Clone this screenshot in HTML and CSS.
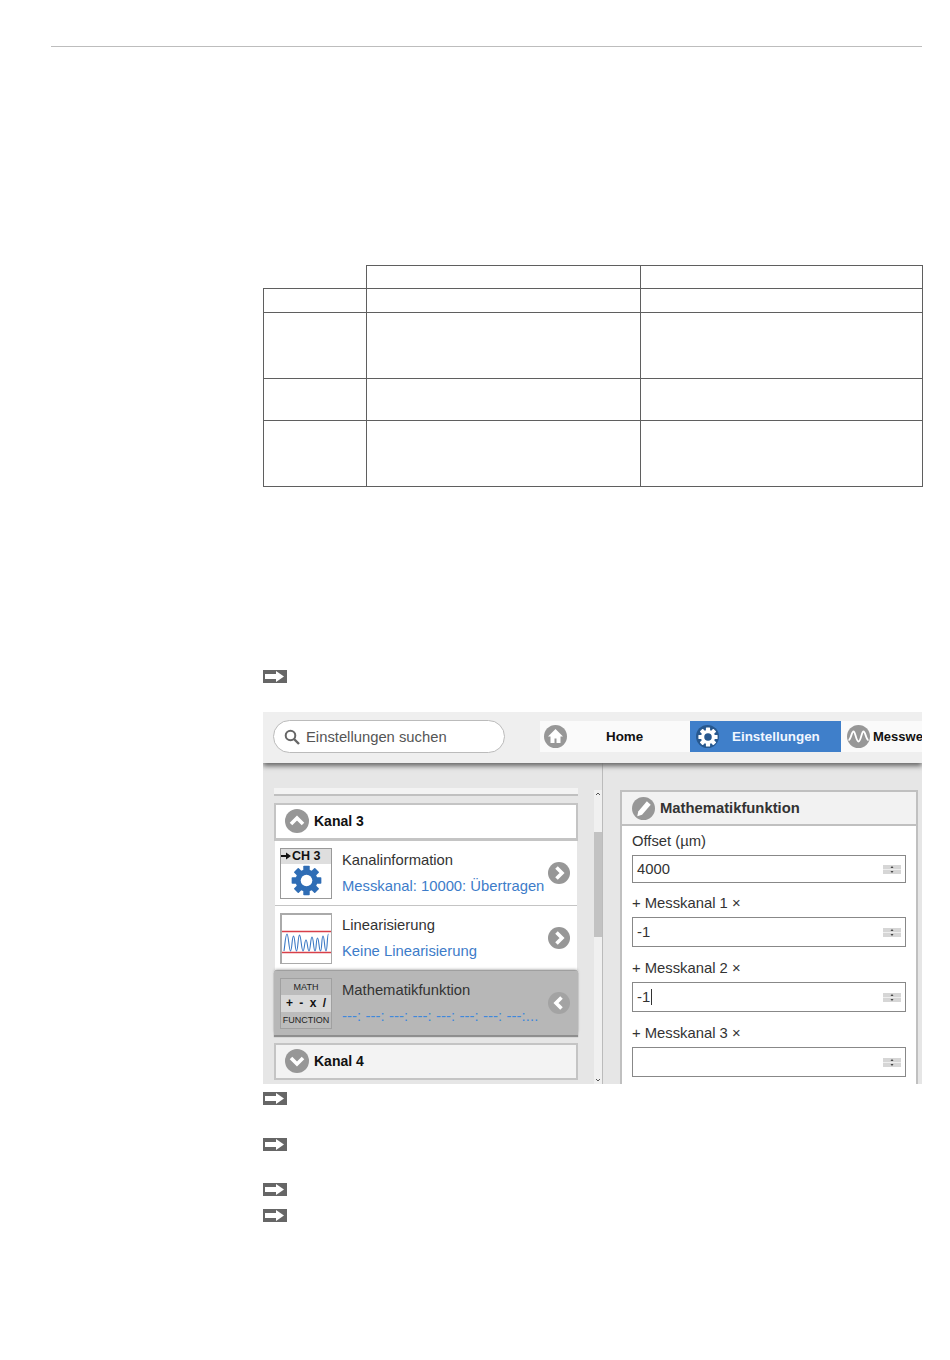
FILE: index.html
```html
<!DOCTYPE html>
<html lang="de">
<head>
<meta charset="UTF-8">
<title>Mathematikfunktion</title>
<link rel="stylesheet" href="styles.css">
</head>
<body>

<svg class="defs" width="0" height="0">
  <symbol id="gear" viewBox="0 0 24 24">
    <circle cx="12" cy="12" r="8.500" fill="currentColor"></circle>
    <g fill="currentColor">
      <rect x="9.500" y="0.500" width="5" height="23" rx="0.600"></rect>
      <rect x="9.500" y="0.500" width="5" height="23" rx="0.600" transform="rotate(45 12 12)"></rect>
      <rect x="9.500" y="0.500" width="5" height="23" rx="0.600" transform="rotate(90 12 12)"></rect>
      <rect x="9.500" y="0.500" width="5" height="23" rx="0.600" transform="rotate(135 12 12)"></rect>
    </g>
    <circle class="gear-hole" cx="12" cy="12" r="4.500"></circle>
  </symbol>
  <symbol id="arrow" viewBox="0 0 24 13">
    <rect width="24" height="13" fill="#666"></rect>
    <path d="M2 4h11V1L21 6.500l-8 5.500V9H2z" fill="#fff"></path>
  </symbol>
  <symbol id="chev-right" viewBox="0 0 22 22">
    <circle cx="11" cy="11" r="11" fill="#979797"></circle>
    <path d="M8.500 5.500L14 11l-5.500 5.500" fill="none" stroke="#fff" stroke-width="3.600"></path>
  </symbol>
  <symbol id="spin" viewBox="0 0 18 9">
    <rect width="18" height="9" fill="#d6d6d6"></rect>
    <rect y="4" width="18" height="1" fill="#eee"></rect>
    <path d="M9 1l1.500 2h-3zM9 8L7.500 6h3z" fill="#444"></path>
  </symbol>
</svg>

<div class="page">
  <div class="top-rule"></div>

  <div class="content">
    <table class="spec">
      <tr class="r1"><td class="blank"></td><td></td><td></td></tr>
      <tr class="r2"><td></td><td></td><td></td></tr>
      <tr class="r3"><td></td><td></td><td></td></tr>
      <tr class="r4"><td></td><td></td><td></td></tr>
      <tr class="r5"><td></td><td></td><td></td></tr>
    </table>

    <svg class="step first"><use href="#arrow"></use></svg>

    <div class="shot">
      <div class="topbar">
        <div class="search">
          <svg class="search-icon" viewBox="0 0 16 16">
            <circle cx="6.500" cy="6.500" r="4.800" fill="none" stroke="#666" stroke-width="2"></circle>
            <path d="M10 10l5 5" stroke="#666" stroke-width="2.400"></path>
          </svg>
          <span>Einstellungen suchen</span>
        </div>
        <div class="tabs">
          <div class="tab home">
            <svg class="tab-icon" viewBox="0 0 23 23">
              <circle cx="11.500" cy="11.500" r="11.500" fill="#979797"></circle>
              <path d="M11.500 4L4 11.500h2.500V18h4v-4.500h2V18h4v-6.500H19z" fill="#fff"></path>
            </svg>
            <span>Home</span>
          </div>
          <div class="tab active">
            <span class="gear-round"><svg class="gear-small"><use href="#gear"></use></svg></span>
            <span>Einstellungen</span>
          </div>
          <div class="tab values">
            <svg class="tab-icon" viewBox="0 0 23 23">
              <circle cx="11.500" cy="11.500" r="11.500" fill="#979797"></circle>
              <path d="M1.500 15C4 15 4.500 6.500 6.500 6.500S9 16.500 11.500 16.500 14.500 6.500 16.500 6.500 19 15 21.500 15" fill="none" stroke="#fff" stroke-width="1.800"></path>
            </svg>
            <span>Messwe</span>
          </div>
        </div>
      </div>

      <div class="panes">
        <div class="left">
          <div class="list">
            <div class="stub"></div>

            <div class="group open">
              <svg class="group-icon" viewBox="0 0 24 24">
                <circle cx="12" cy="12" r="12" fill="#979797"></circle>
                <path d="M6 15l6-6 6 6" fill="none" stroke="#fff" stroke-width="3.600"></path>
              </svg>
              <span>Kanal 3</span>
            </div>

            <div class="item">
              <div class="thumb ch">
                <div class="ch-label">
                  <svg class="ch-arrow" viewBox="0 0 10 8"><path d="M0 3h5V0.500L10 4 5 7.500V5H0z" fill="#111"></path></svg>
                  <span>CH 3</span>
                </div>
                <svg class="ch-gear"><use href="#gear"></use></svg>
              </div>
              <div class="item-text">
                <div class="item-title">Kanalinformation</div>
                <div class="item-sub">Messkanal: 10000: Übertragen</div>
              </div>
              <svg class="chev"><use href="#chev-right"></use></svg>
            </div>

            <div class="item">
              <div class="thumb lin">
                <svg class="lin-plot" viewBox="0 0 49 48">
                  <path d="M0 16.500h49M0 37.500h49" stroke="#d8404a" stroke-width="1.500"></path>
                  <path d="M2 36C3 30 3.500 19 5 19S7 36 8.500 36 10 21 11.500 21 13 36 14.500 36 16 20 17.500 20 19.500 36 21 36 22.500 25 24 25 25.500 36 27 36 28.500 22 30 22 31.500 36 33 36 34 23 35.500 23 37 36 38.500 36 39.500 21 41 21 42.500 36 44 36 45 19 46.500 19" fill="none" stroke="#3b78c4" stroke-width="1.100"></path>
                </svg>
              </div>
              <div class="item-text">
                <div class="item-title">Linearisierung</div>
                <div class="item-sub">Keine Linearisierung</div>
              </div>
              <svg class="chev"><use href="#chev-right"></use></svg>
            </div>

            <div class="item selected">
              <div class="thumb math">
                <div class="math-small">MATH</div>
                <div class="math-ops">+ - x /</div>
                <div class="math-small">FUNCTION</div>
              </div>
              <div class="item-text">
                <div class="item-title">Mathematikfunktion</div>
                <div class="item-sub">---: ---: ---: ---: ---: ---: ---: ---:...</div>
              </div>
              <svg class="chev" viewBox="0 0 22 22">
                <circle cx="11" cy="11" r="11" fill="#a3a3a3"></circle>
                <path d="M13.500 5.500L8 11l5.500 5.500" fill="none" stroke="#fff" stroke-width="3.600"></path>
              </svg>
            </div>

            <div class="group closed">
              <svg class="group-icon" viewBox="0 0 24 24">
                <circle cx="12" cy="12" r="12" fill="#979797"></circle>
                <path d="M6 9l6 6 6-6" fill="none" stroke="#fff" stroke-width="3.600"></path>
              </svg>
              <span>Kanal 4</span>
            </div>
          </div>

          <div class="scrollbar">
            <svg class="scroll-end" viewBox="0 0 8 8"><path d="M2 5l2-2 2 2" fill="none" stroke="#555"></path></svg>
            <div class="scroll-track"><div class="scroll-thumb"></div></div>
            <svg class="scroll-end" viewBox="0 0 8 8"><path d="M2 3l2 2 2-2" fill="none" stroke="#555"></path></svg>
          </div>
        </div>

        <div class="right">
          <div class="panel">
            <div class="panel-head">
              <svg class="panel-icon" viewBox="0 0 24 24">
                <circle cx="12" cy="12" r="12" fill="#979797"></circle>
                <path d="M15.500 4.500l4 3.500-9 10.500-5 1.500 1-5z" fill="#fff"></path>
              </svg>
              <span>Mathematikfunktion</span>
            </div>
            <div class="panel-body">
              <div class="field first-field">
                <div class="field-label">Offset (µm)</div>
                <div class="field-input short"><span>4000</span><svg class="spin"><use href="#spin"></use></svg></div>
              </div>
              <div class="field second-field">
                <div class="field-label">+ Messkanal 1 ×</div>
                <div class="field-input"><span>-1</span><svg class="spin"><use href="#spin"></use></svg></div>
              </div>
              <div class="field">
                <div class="field-label">+ Messkanal 2 ×</div>
                <div class="field-input"><span class="caret">-1</span><svg class="spin"><use href="#spin"></use></svg></div>
              </div>
              <div class="field">
                <div class="field-label">+ Messkanal 3 ×</div>
                <div class="field-input"><span></span><svg class="spin"><use href="#spin"></use></svg></div>
              </div>
            </div>
          </div>
        </div>
      </div>
    </div>

    <svg class="step s2"><use href="#arrow"></use></svg>
    <svg class="step s3"><use href="#arrow"></use></svg>
    <svg class="step s4"><use href="#arrow"></use></svg>
    <svg class="step s5"><use href="#arrow"></use></svg>
  </div>
</div>

</body>
</html>
```

FILE: styles.css
```css
body {
  margin: 0;
  background: white;
  font-family: "Liberation Sans", Arial, sans-serif;
  color: #333;
}

.defs {
  display: block;
  height: 0;
}

.page {
  padding: 46px 28px 0 51px;
}

.top-rule {
  height: 1px;
  background: #bdbdbd;
}

.content {
  margin-left: 212px;
  padding-top: 218px;
}

/* empty table, only the lines are visible */
.spec {
  border-collapse: collapse;
  table-layout: fixed;
  width: 660px;
}

.spec td {
  border: 1px solid #5f5f5f;
  padding: 0;
}

.spec td:nth-child(1) { width: 102px; }
.spec td:nth-child(2) { width: 273px; }

.spec td.blank {
  border-top: none;
  border-left: none;
}

.r1 { height: 23px; }
.r2 { height: 24px; }
.r3 { height: 66px; }
.r4 { height: 42px; }
.r5 { height: 66px; }

.step {
  display: block;
  width: 24px;
  height: 13px;
}

.step.first { margin-top: 183px; }
.step.s2 { margin-top: 8px; }
.step.s3 { margin-top: 33px; }
.step.s4 { margin-top: 32px; }
.step.s5 { margin-top: 13px; }

/* embedded software screenshot */
.shot {
  width: 659px;
  height: 372px;
  margin-top: 29px;
  overflow: hidden;
  background: #e6e6e6;
}

.topbar {
  position: relative;
  height: 51px;
  box-sizing: border-box;
  display: flex;
  align-items: center;
  padding: 0 0 2px 10px;
  background: #efefef;
  box-shadow: 0 3px 5px #666;
}

.search {
  width: 232px;
  height: 33px;
  box-sizing: border-box;
  display: flex;
  align-items: center;
  gap: 6px;
  padding-left: 10px;
  background: white;
  border: 1px solid #bbb;
  border-radius: 17px;
  font-size: 14.800px;
  color: #555;
}

.search-icon {
  width: 16px;
  height: 16px;
}

.tabs {
  display: flex;
  height: 31px;
  margin-left: 35px;
  flex: 1;
  overflow: hidden;
  font-size: 13.400px;
  font-weight: bold;
  color: #111;
}

.tab {
  display: flex;
  align-items: center;
  background: #fafafa;
  flex-shrink: 0;
}

.tab-icon {
  width: 23px;
  height: 23px;
  flex-shrink: 0;
}

.home {
  width: 150px;
  padding-left: 4px;
  box-sizing: border-box;
}

.home span {
  margin-left: 39px;
}

.active {
  width: 151px;
  padding-left: 6px;
  box-sizing: border-box;
  background: #3f7fca;
  color: #f0f6ff;
}

.active > span:last-child {
  margin-left: 13px;
}

.gear-round {
  width: 23px;
  height: 23px;
  border-radius: 50%;
  background: #27588f;
  display: flex;
  align-items: center;
  justify-content: center;
}

.gear-hole {
  fill: var(--hole);
}

.gear-small {
  --hole: #27588f;
  width: 20px;
  height: 20px;
  color: white;
}

.values {
  box-sizing: border-box;
  padding-left: 6px;
  width: 81px;
  font-size: 13px;
}

.values span {
  margin-left: 3px;
  white-space: nowrap;
}

.panes {
  display: flex;
  height: 321px;
}

.left {
  width: 340px;
  box-sizing: border-box;
  display: flex;
  padding: 25px 0 0 11px;
  border-right: 1px solid #bbb;
}

.list {
  width: 304px;
  flex-shrink: 0;
}

.stub {
  height: 8px;
  background: #f3f3f3;
  border-bottom: 2px solid #c0c0c0;
  box-sizing: border-box;
}

.group {
  display: flex;
  align-items: center;
  gap: 5px;
  padding-left: 9px;
  box-sizing: border-box;
  font-size: 14px;
  font-weight: bold;
  color: #111;
  border: 2px solid #c4c4c4;
}

.group-icon {
  width: 24px;
  height: 24px;
}

.open {
  height: 38px;
  margin-top: 7px;
  padding-bottom: 1px;
  background: white;
  border-bottom-width: 3px;
}

.closed {
  height: 37px;
  margin-top: 8px;
  padding-bottom: 1px;
  background: #f3f3f3;
}

.item {
  height: 65px;
  margin: 0 1px;
  box-sizing: border-box;
  display: flex;
  align-items: center;
  padding-left: 5px;
  background: white;
  border-bottom: 1px solid #c4c4c4;
}

.item.selected {
  height: 64px;
  background: #b7b7b7;
  border-bottom: none;
  margin: 0;
  padding-left: 6px;
  box-shadow: 0 -2px 3px -1px #888, 0 2px 1px #8f8f8f;
  position: relative;
}

.selected .chev {
  margin-right: 8px;
}

.thumb {
  width: 52px;
  height: 51px;
  box-sizing: border-box;
  border: 1px solid #999;
  flex-shrink: 0;
  background: white;
}

.ch-label {
  height: 15px;
  display: flex;
  align-items: center;
  gap: 1px;
  background: #dedede;
  font-size: 12.500px;
  font-weight: bold;
  line-height: 17px;
  color: #111;
  white-space: nowrap;
}

.ch-arrow {
  width: 10px;
  height: 8px;
  flex-shrink: 0;
}

.ch-gear {
  --hole: white;
  display: block;
  width: 31px;
  height: 31px;
  margin: 1px auto 0;
  color: #2f6db5;
}

.lin {
  border-left-width: 2px;
  border-top-width: 2px;
  border-color: #aaa;
}

.lin-plot {
  display: block;
  width: 49px;
  height: 48px;
}

.math {
  background: #bcbcbc;
  text-align: center;
  border-color: #a0a0a0;
}

.math-small {
  font-size: 9px;
  line-height: 16px;
  color: #222;
}

.math-ops {
  height: 17px;
  background: #d8d8d8;
  font-size: 12px;
  font-weight: bold;
  line-height: 17px;
  color: #111;
  white-space: pre;
  word-spacing: 3px;
}

.item-text {
  flex: 1;
  padding-left: 10px;
  min-width: 0;
  white-space: nowrap;
}

.item-title {
  font-size: 14.800px;
  line-height: 17px;
  color: #333;
}

.item-sub {
  margin-top: 9px;
  font-size: 14.800px;
  line-height: 17px;
  color: #3d7cc9;
}

.chev {
  width: 22px;
  height: 22px;
  flex-shrink: 0;
  margin-right: 7px;
}

.selected .item-sub {
  color: #3f88dc;
  letter-spacing: 0.100px;
}

.scrollbar {
  width: 8px;
  margin-left: 16px;
  margin-top: 2px;
  display: flex;
  flex-direction: column;
  background: #f0f0f0;
}

.scroll-end {
  width: 8px;
  height: 8px;
  flex-shrink: 0;
}

.scroll-track {
  flex: 1;
  padding-top: 34px;
}

.scroll-thumb {
  height: 105px;
  background: #c2c2c2;
}

.right {
  flex: 1;
  padding: 27px 4px 0 17px;
}

.panel {
  height: 100%;
  display: flex;
  flex-direction: column;
}

.panel-head {
  height: 36px;
  box-sizing: border-box;
  display: flex;
  align-items: center;
  gap: 5px;
  padding-left: 10px;
  background: #f2f2f2;
  border: 2px solid #c0c0c0;
  font-size: 14.800px;
  font-weight: bold;
  color: #333;
  flex-shrink: 0;
}

.panel-icon {
  width: 23px;
  height: 23px;
}

.panel-body {
  flex: 1;
  padding: 0 10px;
  background: white;
  border-left: 2px solid #c0c0c0;
  border-right: 2px solid #c0c0c0;
}

.field {
  margin-top: 13px;
}

.first-field {
  margin-top: 7px;
}

.second-field {
  margin-top: 12px;
}

.field-label {
  font-size: 14.800px;
  line-height: 17px;
  color: #333;
}

.field-input {
  height: 30px;
  margin-top: 5px;
  box-sizing: border-box;
  display: flex;
  align-items: center;
  justify-content: space-between;
  padding: 0 4px;
  border: 1px solid #888;
  font-size: 14.800px;
  color: #333;
  background: white;
}

.field-input.short {
  height: 28px;
}

.caret {
  border-right: 1px solid #333;
  padding-right: 1px;
}

.spin {
  width: 18px;
  height: 9px;
}
```
